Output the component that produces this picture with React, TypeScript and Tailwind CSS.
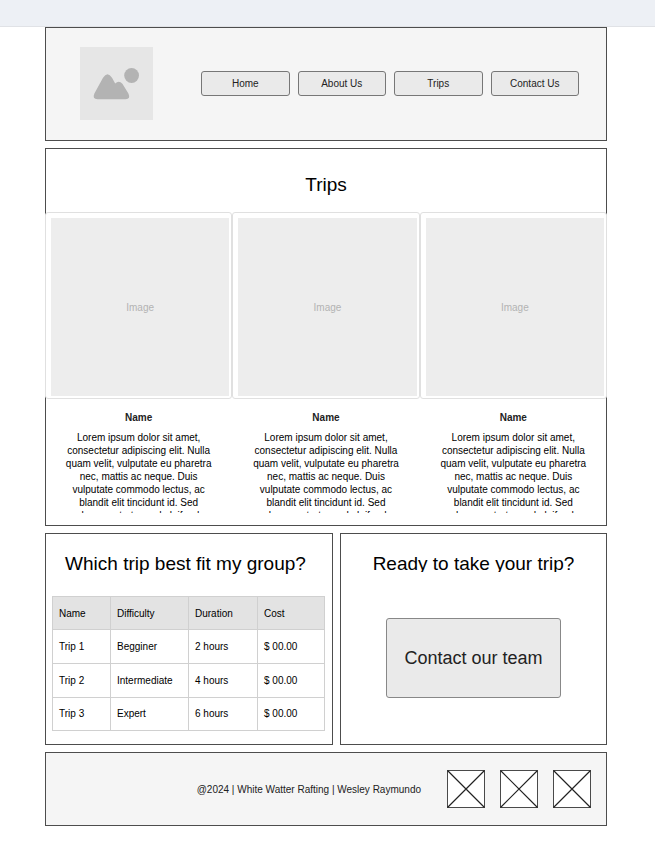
const navItems = ["Home", "About Us", "Trips", "Contact Us"];

const lorem =
  "Lorem ipsum dolor sit amet, consectetur adipiscing elit. Nulla quam velit, vulputate eu pharetra nec, mattis ac neque. Duis vulputate commodo lectus, ac blandit elit tincidunt id. Sed rhoncus, tortor sed eleifend";

const rows = [
  ["Trip 1", "Begginer", "2 hours", "$ 00.00"],
  ["Trip 2", "Intermediate", "4 hours", "$ 00.00"],
  ["Trip 3", "Expert", "6 hours", "$ 00.00"],
];

function Logo() {
  return (
    <svg viewBox="0 0 73 73" className="size-[73px] shrink-0" role="img" aria-label="Logo">
      <rect width="73" height="73" fill="#e6e6e6" />
      <circle cx="51.6" cy="28.5" r="7.4" fill="#b3b3b3" />
      <path
        d="M14.4 46.5 L23 30.8 Q27.5 23.6 32 30.8 L35.2 36.6 Q38.8 33 42.4 36.8 L48.4 46.5 Q51 52.2 45.5 52.2 H17.5 Q12 52.2 14.4 46.5 Z"
        fill="#b3b3b3"
      />
    </svg>
  );
}

function CrossBox() {
  return (
    <svg viewBox="0 0 38 38" className="size-[38px]" aria-hidden="true">
      <rect x="0.5" y="0.5" width="37" height="37" fill="#fff" stroke="#4a4a4a" />
      <path d="M0.5 0.5 L37.5 37.5 M37.5 0.5 L0.5 37.5" stroke="#222" strokeWidth="1.2" />
    </svg>
  );
}

function TripCard() {
  return (
    <article>
      <div className="aspect-square rounded-[3px] border border-[#e0e0e0] bg-white pt-[5px] pr-0.5 pb-0.5 pl-[5px]">
        <div className="flex h-full items-center justify-center bg-[#ededed] text-[#b3b3b3]">Image</div>
      </div>
      <h3 className="mt-3 text-center font-bold text-[#222]">Name</h3>
      <p className="mx-auto mt-[7px] h-[82px] w-[154px] overflow-hidden text-center text-black">{lorem}</p>
    </article>
  );
}

export default function App() {
  return (
    <div className="bg-white font-['Liberation_Sans',Arial,sans-serif] text-[10px] leading-[13px] text-[#222]">
      <div className="h-[27px] border-b border-[#e0e2e6] bg-[#edf0f5]" />
      <div className="flex flex-col gap-[7px] pr-12 pl-[45px]">
        <header className="flex items-center justify-between border border-[#4d4d4d] bg-[#f5f5f5] pt-[19px] pr-[27px] pb-5 pl-[34px]">
          <Logo />
          <nav className="grid w-[378px] grid-cols-4 gap-2">
            {navItems.map((item) => (
              <button key={item} className="h-[25px] rounded-[3px] border border-[#777] bg-[#eaeaea]">
                {item}
              </button>
            ))}
          </nav>
        </header>

        <section className="border border-[#4d4d4d] pb-3">
          <h2 className="pt-6 pb-[15px] text-center text-[19px] leading-[24px] text-black">Trips</h2>
          <div className="-mx-px grid grid-cols-3">
            <TripCard />
            <TripCard />
            <TripCard />
          </div>
        </section>

        <div className="grid grid-cols-[288fr_267fr] gap-[7px]">
          <section className="border border-[#4d4d4d] pt-[18px] pr-[7px] pb-[13px] pl-[6px]">
            <h2 className="mr-1.5 text-center text-[19px] leading-[24px] text-black">Which trip best fit my group?</h2>
            <table className="mt-5 h-[135px] w-full table-fixed border-collapse text-left text-black">
              <colgroup>
                <col className="w-[58px]" />
                <col className="w-[78px]" />
                <col className="w-[69px]" />
                <col />
              </colgroup>
              <thead className="bg-[#e3e3e3]">
                <tr className="h-[33px]">
                  {["Name", "Difficulty", "Duration", "Cost"].map((h) => (
                    <th key={h} className="border border-[#d0d0d0] px-[6px] font-normal">
                      {h}
                    </th>
                  ))}
                </tr>
              </thead>
              <tbody>
                {rows.map((row) => (
                  <tr key={row[0]} className="h-[33px]">
                    {row.map((cell) => (
                      <td key={cell} className="border border-[#d0d0d0] px-[6px]">
                        {cell}
                      </td>
                    ))}
                  </tr>
                ))}
              </tbody>
            </table>
          </section>

          <section className="flex flex-col items-center border border-[#4d4d4d] pt-[18px]">
            <h2 className="h-5 overflow-hidden text-[19px] leading-[24px] text-black">Ready to take your trip?</h2>
            <button className="mt-[46px] h-[80px] w-[175px] rounded-[3px] border border-[#888] bg-[#eaeaea] text-[18px] leading-[24px]">
              Contact our team
            </button>
          </section>
        </div>

        <footer className="flex items-center justify-end border border-[#4d4d4d] bg-[#f5f5f5] py-[17px] pr-[15px]">
          <p>@2024 | White Watter Rafting | Wesley Raymundo</p>
          <div className="ml-[26px] flex gap-[15px]">
            <CrossBox />
            <CrossBox />
            <CrossBox />
          </div>
        </footer>
      </div>
    </div>
  );
}
